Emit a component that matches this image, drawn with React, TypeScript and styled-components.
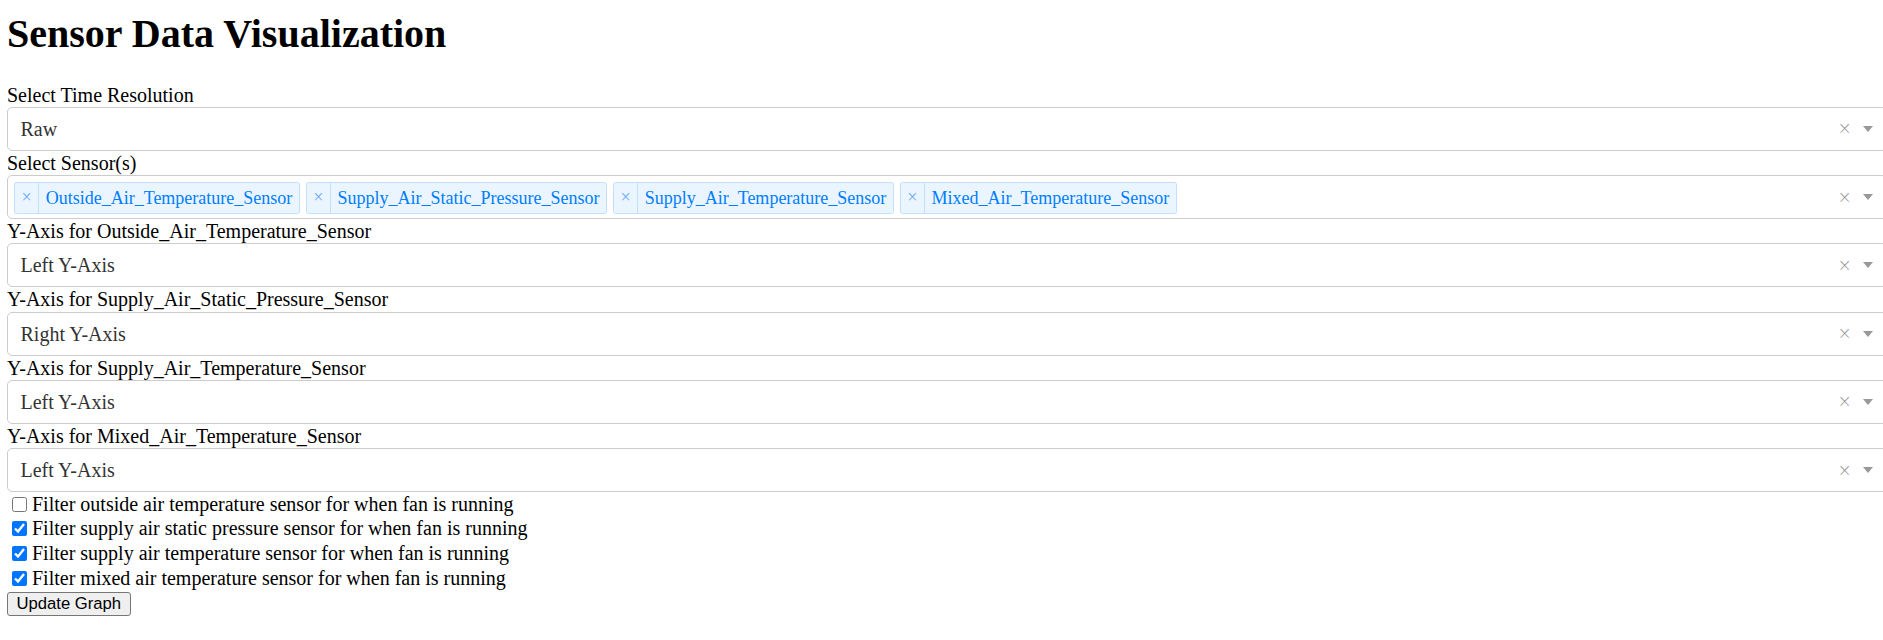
import React from "react";
import styled, { createGlobalStyle } from "styled-components";

const GlobalStyle = createGlobalStyle`
  html, body { margin: 0; padding: 0; overflow: hidden; background: #fff; }
  body { font-family: "Liberation Serif", "Times New Roman", serif; color: #000; }
`;

const Page = styled.div`
  margin-right: -4px;
  padding: 11px 0 0 7px;
`;

const Title = styled.h1`
  margin: 0 0 25.5px;
  font-size: 40px;
  line-height: 46px;
  font-weight: bold;
`;

const Label = styled.div`
  font-size: 20px;
  line-height: 24.25px;
`;

const Control = styled.div`
  display: flex;
  align-items: center;
  box-sizing: border-box;
  height: 44px;
  border: 1px solid #ccc;
  border-radius: 5px;
  background: #fff;
`;

const Value = styled.div`
  flex: 1;
  padding: 0 12.5px;
  font-size: 20px;
  line-height: 42px;
  color: #333;
`;

const MultiValues = styled.div`
  flex: 1;
  align-self: flex-start;
  display: flex;
  flex-wrap: wrap;
`;

const Chip = styled.div`
  display: flex;
  margin: 6px 0 0 6px;
  border: 1px solid #c2e0ff;
  border-radius: 2.5px;
  background: #ebf5ff;
  color: #007eff;
  font-size: 18px;
  line-height: 25px;
`;

const ChipIcon = styled.span`
  padding: 1px 6.5px 3px;
  border-right: 1px solid #c2e0ff;
  display: flex;
  align-items: center;
  font-size: 18px;
  color: #66a9f5;
`;

const ChipLabel = styled.span`
  padding: 2.5px 6.5px;
`;

const ClearZone = styled.span`
  width: 21px;
  text-align: center;
  color: #999;
  font-family: "DejaVu Sans", sans-serif;
  font-size: 17px;
  font-weight: 200;
  line-height: 1;
`;

const ArrowZone = styled.span`
  box-sizing: border-box;
  width: 31px;
  padding-right: 6px;
  display: flex;
  justify-content: center;
`;

const Arrow = styled.span`
  width: 0;
  height: 0;
  border-style: solid;
  border-width: 6px 5.5px 0;
  border-color: #999 transparent transparent;
`;

const CheckRow = styled.label`
  display: flex;
  align-items: center;
  height: 24.6px;
  font-size: 20px;
  line-height: 23px;
`;

const Checkbox = styled.input`
  width: 15px;
  height: 15px;
  margin: 0 5px;
`;

const Button = styled.button`
  display: block;
  box-sizing: border-box;
  margin-top: 2px;
  height: 24px;
  padding: 1px 8.5px;
  font-family: "Liberation Sans", Arial, sans-serif;
  font-size: 16.67px;
  color: #000;
  background: #efefef;
  border: 1px solid #767676;
  border-radius: 3px;
`;

const SelectEnd = () => (
  <>
    <ClearZone>×</ClearZone>
    <ArrowZone>
      <Arrow />
    </ArrowZone>
  </>
);

const SingleSelect = ({ value }: { value: string }) => (
  <Control>
    <Value>{value}</Value>
    <SelectEnd />
  </Control>
);

const sensors = [
  "Outside_Air_Temperature_Sensor",
  "Supply_Air_Static_Pressure_Sensor",
  "Supply_Air_Temperature_Sensor",
  "Mixed_Air_Temperature_Sensor",
];

const axes = ["Left Y-Axis", "Right Y-Axis", "Left Y-Axis", "Left Y-Axis"];

const filters = [
  { text: "Filter outside air temperature sensor for when fan is running", checked: false },
  { text: "Filter supply air static pressure sensor for when fan is running", checked: true },
  { text: "Filter supply air temperature sensor for when fan is running", checked: true },
  { text: "Filter mixed air temperature sensor for when fan is running", checked: true },
];

export default function App() {
  return (
    <>
      <GlobalStyle />
      <Page>
        <Title>Sensor Data Visualization</Title>
        <Label>Select Time Resolution</Label>
        <SingleSelect value="Raw" />
        <Label>Select Sensor(s)</Label>
        <Control>
          <MultiValues>
            {sensors.map((s) => (
              <Chip key={s}>
                <ChipIcon>×</ChipIcon>
                <ChipLabel>{s}</ChipLabel>
              </Chip>
            ))}
          </MultiValues>
          <SelectEnd />
        </Control>
        {sensors.map((s, i) => (
          <React.Fragment key={s}>
            <Label>Y-Axis for {s}</Label>
            <SingleSelect value={axes[i]} />
          </React.Fragment>
        ))}
        {filters.map((f) => (
          <CheckRow key={f.text}>
            <Checkbox type="checkbox" defaultChecked={f.checked} />
            {f.text}
          </CheckRow>
        ))}
        <Button>Update Graph</Button>
      </Page>
    </>
  );
}
